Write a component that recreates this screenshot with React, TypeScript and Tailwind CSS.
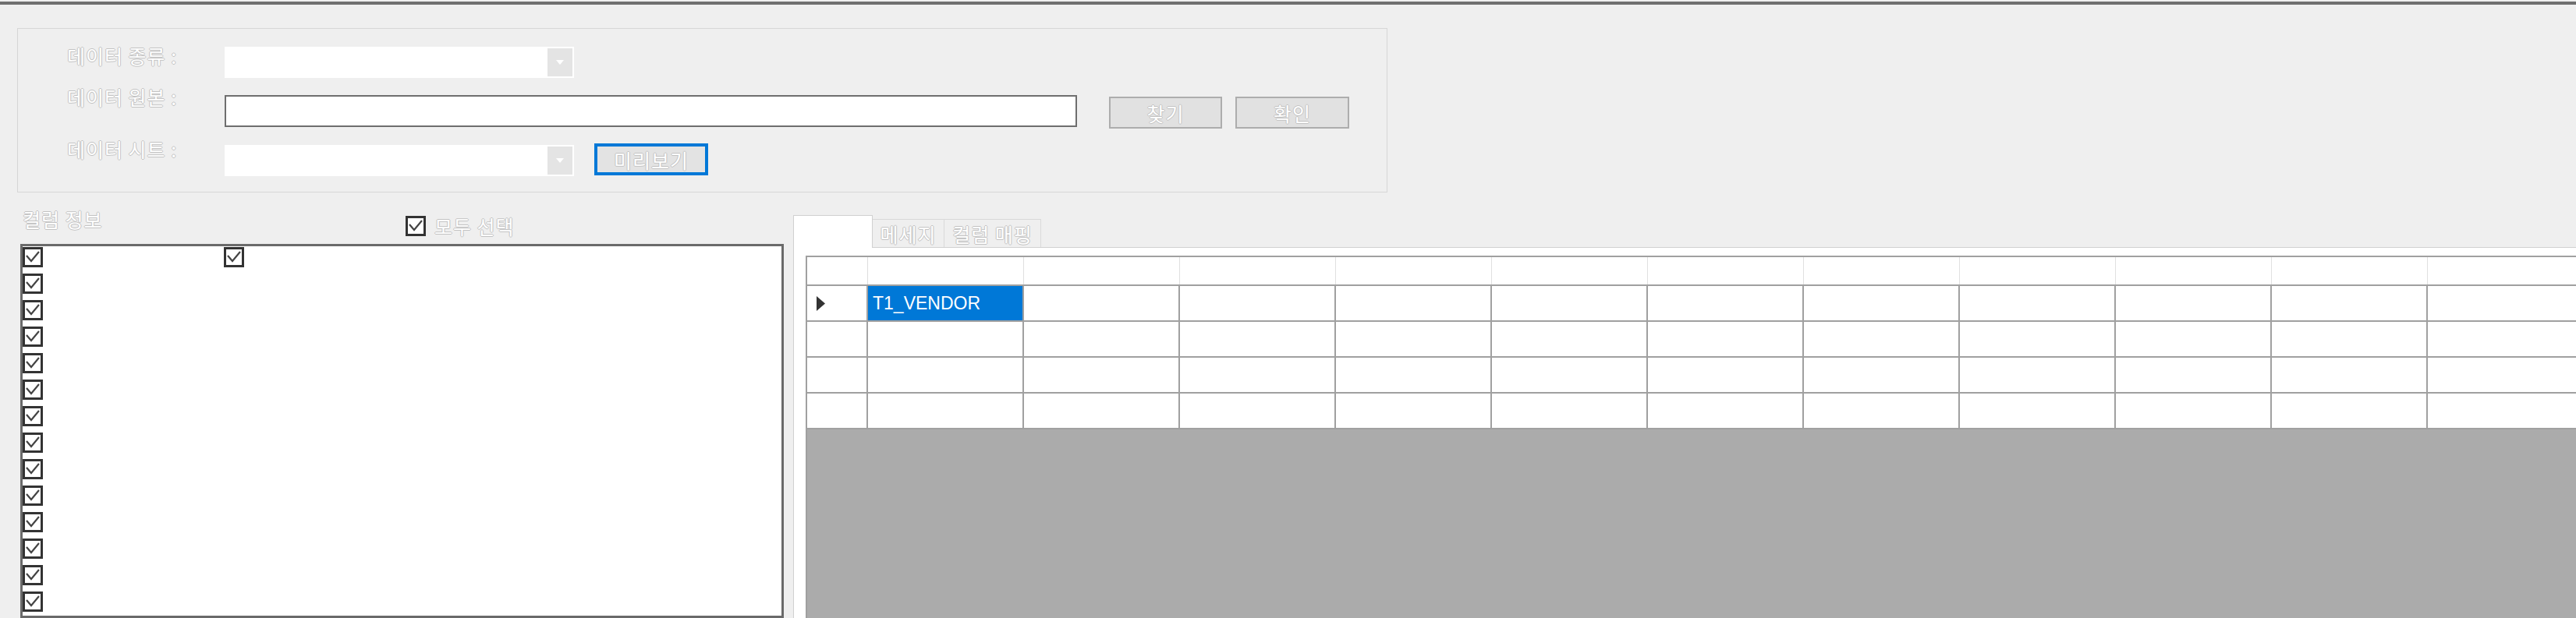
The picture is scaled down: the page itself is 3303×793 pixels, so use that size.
import React from "react";

const label =
  "text-[25px] leading-[28px] tracking-[1px] text-white whitespace-nowrap [text-shadow:1px_0_0_#c2c2c2,-1px_0_0_#c2c2c2,0_1px_0_#c2c2c2,0_-1px_0_#c2c2c2]";

function CheckBox() {
  return (
    <div className="w-[26px] h-[26px] shrink-0 border-[3px] border-[#333333] bg-white flex items-center justify-center">
      <svg width="20" height="20" viewBox="0 0 20 20">
        <path d="M2 8 L8 15 L18 3" fill="none" stroke="#444444" strokeWidth="2.2" />
      </svg>
    </div>
  );
}

function Combo() {
  return (
    <div className="w-[448px] h-[40px] bg-white flex justify-end p-[2px]">
      <div className="w-[32px] h-full bg-[#e4e4e4] flex items-center justify-center">
        <svg width="10" height="6" viewBox="0 0 10 6">
          <path d="M0 0 L10 0 L5 6 Z" fill="#ffffff" />
        </svg>
      </div>
    </div>
  );
}

export default function App() {
  const cols = Array.from({ length: 12 });
  const rows = Array.from({ length: 4 });
  const listRows = Array.from({ length: 16 });

  return (
    <div className="w-[3303px] h-[793px] overflow-hidden bg-[#efefef] flex flex-col font-['Noto_Sans_CJK_KR','Noto_Sans',sans-serif]">
      {/* top line */}
      <div className="mt-[2px] h-[4px] bg-[#6f6f6f] shrink-0" />

      {/* source group */}
      <div className="ml-[22px] mt-[30px] w-[1757px] h-[211px] shrink-0 border border-[#d6d6d6] pt-[23px]">
        <div className="flex items-start h-[40px]">
          <div className="w-[265px] pl-[63px] -mt-[3px]">
            <span className={label}>데이터 종류 :</span>
          </div>
          <Combo />
        </div>

        <div className="flex items-start h-[41px] mt-[22px]">
          <div className="w-[265px] pl-[63px] -mt-[12px]">
            <span className={label}>데이터 원본 :</span>
          </div>
          <div className="w-[1093px] h-[41px] bg-white border-2 border-[#6e6e6e]" />
          <button className="ml-[41px] mt-[2px] w-[145px] h-[41px] border-2 border-[#adadad] bg-[#e1e1e1] flex items-center justify-center">
            <span className={label}>찾기</span>
          </button>
          <button className="ml-[17px] mt-[2px] w-[146px] h-[41px] border-2 border-[#adadad] bg-[#e1e1e1] flex items-center justify-center">
            <span className={label}>확인</span>
          </button>
        </div>

        <div className="flex items-start h-[40px] mt-[23px]">
          <div className="w-[265px] pl-[63px] -mt-[9px]">
            <span className={label}>데이터 시트 :</span>
          </div>
          <Combo />
          <button className="ml-[26px] -mt-[2px] w-[146px] h-[41px] border-[4px] border-[#0078d7] bg-[#e3e3e3] flex items-center justify-center">
            <span className={label}>미리보기</span>
          </button>
        </div>
      </div>

      {/* lower section */}
      <div className="flex flex-1 min-h-0">
        {/* column info */}
        <div className="ml-[26px] w-[979px] flex flex-col min-h-0">
          <div className="h-[66px] shrink-0 flex items-start">
            <div className="w-[494px] pl-[3px] mt-[20px]">
              <span className={label}>컬럼 정보</span>
            </div>
            <div className="mt-[29px] flex items-center gap-[11px]">
              <CheckBox />
              <span className={label}>모두 선택</span>
            </div>
          </div>
          <div className="flex-1 min-h-0 overflow-hidden bg-white border-[3px] border-[#6a6a6a] pt-[1px]">
            {listRows.map((_, i) => (
              <div key={i} className="h-[34px] flex items-start">
                <CheckBox />
                {i === 0 && (
                  <div className="ml-[232px]">
                    <CheckBox />
                  </div>
                )}
              </div>
            ))}
          </div>
        </div>

        {/* tab control */}
        <div className="ml-[12px] flex-1 min-w-0 flex flex-col pt-[29px]">
          <div className="flex items-end h-[41px] shrink-0">
            <div className="relative z-10 w-[102px] h-[42px] -mb-[1px] bg-white border-t border-l border-r border-[#d0d0d0]" />
            <div className="w-[92px] h-[36px] border-t border-r border-[#d9d9d9] flex items-center justify-center">
              <span className={label}>메세지</span>
            </div>
            <div className="w-[124px] h-[36px] border-t border-r border-[#d9d9d9] flex items-center justify-center">
              <span className={label}>컬럼 매핑</span>
            </div>
          </div>
          <div className="flex-1 min-h-0 bg-white border-t border-l border-[#d0d0d0] pt-[10px] pl-[15px] flex flex-col">
            <div className="flex-1 min-h-0 overflow-hidden bg-[#ababab] border-t-2 border-l-2 border-[#a0a0a0]">
              <div className="flex h-[37px] bg-white border-b-2 border-[#a0a0a0]">
                <div className="w-[78px] shrink-0 border-r border-[#dedede]" />
                {cols.map((_, i) => (
                  <div key={i} className="w-[200px] shrink-0 border-r border-[#e0e0e0]" />
                ))}
              </div>
              {rows.map((_, r) => (
                <div key={r} className="flex h-[46px] border-b-2 border-[#a0a0a0] bg-white">
                  <div className="w-[78px] shrink-0 border-r-2 border-[#a0a0a0] flex items-center pl-[12px]">
                    {r === 0 && (
                      <svg width="11" height="19" viewBox="0 0 11 19">
                        <path d="M0 0 L11 9.5 L0 19 Z" fill="#333333" />
                      </svg>
                    )}
                  </div>
                  {cols.map((_, c) => (
                    <div
                      key={c}
                      className={
                        r === 0 && c === 0
                          ? "w-[200px] shrink-0 border-r-2 border-[#a0a0a0] bg-[#0078d7] flex items-center pl-[6px]"
                          : "w-[200px] shrink-0 border-r-2 border-[#a0a0a0]"
                      }
                    >
                      {r === 0 && c === 0 && (
                        <span className="text-[23px] text-white font-['Liberation_Sans',sans-serif]">T1_VENDOR</span>
                      )}
                    </div>
                  ))}
                </div>
              ))}
            </div>
          </div>
        </div>
      </div>
    </div>
  );
}
